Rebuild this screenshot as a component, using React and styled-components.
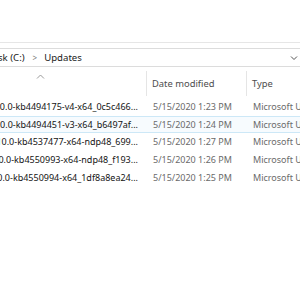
import React from 'react';
import styled, { createGlobalStyle } from 'styled-components';

const GlobalStyle = createGlobalStyle`
    body {
        margin: 0;
        background: #ffffff;
        overflow: hidden;
        font-family: "Noto Sans", "Open Sans", sans-serif;
    }
`

const Window = styled.div`
    width: 300px;
    height: 300px;
    overflow: hidden;
    background: #ffffff;
`

const Ribbon = styled.div`
    height: 42px;
    border-bottom: 1px solid #e6e6e6;
`

const AddressRow = styled.div`
    padding: 5px 0 3px 0;
`

const AddressBar = styled.div`
    height: 17px;
    border-top: 1px solid #dcdcdc;
    border-bottom: 1px solid #dcdcdc;
    display: flex;
    align-items: center;
    font-size: 9.6px;
    color: #1b1b1b;
    overflow: hidden;
`

const Crumb = styled.span`
    white-space: nowrap;
`

const Sep = styled.span`
    font-size: 8px;
    color: #7a7a7a;
    margin: 0 7px 0 8px;
`

const Spacer = styled.div`
    flex: 1;
`

const DropArrow = styled.svg`
    width: 8px;
    height: 6px;
    margin-right: 2px;
`

const Row = styled.div`
    display: flex;
    height: ${p => p.$h || 17}px;
    align-items: center;
    font-size: 9px;
    box-sizing: border-box;
    border: 1px solid ${p => p.$hover ? '#cde8f7' : 'transparent'};
    border-left: none;
    border-right: none;
    background: ${p => p.$hover ? '#f7fbfe' : 'transparent'};
`

const NameCell = styled.div`
    width: 147px;
    flex-shrink: 0;
    display: flex;
    justify-content: flex-end;
    overflow: hidden;
    box-sizing: border-box;
    padding-right: 9px;
    color: #141414;
    white-space: nowrap;
`

const Cell = styled.div`
    width: ${p => p.$w}px;
    flex-shrink: 0;
    box-sizing: border-box;
    padding-left: 6px;
    color: #6a6a6a;
    white-space: nowrap;
    overflow: hidden;
`

const HeaderRow = styled(Row)`
    color: #4d4d4d;
    font-size: 9.4px;
`

const HeadName = styled.div`
    width: 147px;
    flex-shrink: 0;
    align-self: stretch;
    border-right: 1px solid #e5e5e5;
    box-sizing: border-box;
    display: flex;
    justify-content: center;
`

const HeadCell = styled.div`
    width: ${p => p.$w}px;
    flex-shrink: 0;
    align-self: stretch;
    display: flex;
    align-items: center;
    box-sizing: border-box;
    padding-left: 5px;
    border-right: ${p => p.$divider ? '1px solid #e5e5e5' : 'none'};
    color: #4d4d4d;
    white-space: nowrap;
`

const Caret = styled.svg`
    width: 9px;
    height: 5px;
    margin-top: 3px;
    margin-right: 66px;
`

const List = styled.div`
    display: flex;
    flex-direction: column;
    padding-top: 1px;
`

const files = [
    { name: 'windows10.0-kb4494175-v4-x64_0c5c466...', date: '5/15/2020 1:23 PM' },
    { name: 'windows10.0-kb4494451-v3-x64_b6497af...', date: '5/15/2020 1:24 PM', hover: true },
    { name: 'windows10.0-kb4537477-x64-ndp48_699...', date: '5/15/2020 1:27 PM' },
    { name: 'windows10.0-kb4550993-x64-ndp48_f193...', date: '5/15/2020 1:26 PM' },
    { name: 'windows10.0-kb4550994-x64_1df8a8ea24...', date: '5/15/2020 1:25 PM' },
]

const App = () => {
    return (
        <Window>
            <GlobalStyle />
            <Ribbon />
            <AddressRow>
                <AddressBar>
                    <Crumb style={{ marginLeft: -2 }}>sk (C:)</Crumb>
                    <Sep>&gt;</Sep>
                    <Crumb>Updates</Crumb>
                    <Spacer />
                    <DropArrow viewBox="0 0 8 6">
                        <path d="M1 1.5 L4 4.5 L7 1.5" fill="none" stroke="#555" strokeWidth="1" />
                    </DropArrow>
                </AddressBar>
            </AddressRow>
            <HeaderRow $h={27}>
                <HeadName>
                    <Caret viewBox="0 0 9 5">
                        <path d="M1 4.5 L4.5 1 L8 4.5" fill="none" stroke="#9a9a9a" strokeWidth="1" />
                    </Caret>
                </HeadName>
                <HeadCell $w={100} $divider>Date modified</HeadCell>
                <HeadCell $w={60}>Type</HeadCell>
            </HeaderRow>
            <List>
                {files.map(f => (
                    <Row key={f.name} $hover={f.hover} $h={17.6}>
                        <NameCell>{f.name}</NameCell>
                        <Cell $w={100}>{f.date}</Cell>
                        <Cell $w={60}>Microsoft Update Standalone Package</Cell>
                    </Row>
                ))}
            </List>
        </Window>
    )
}

export default App;
